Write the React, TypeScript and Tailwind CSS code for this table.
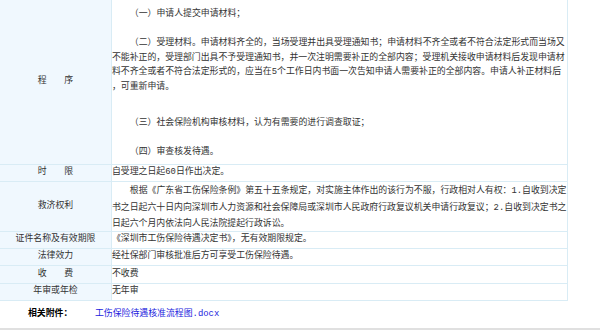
const font = "font-['Liberation_Mono','Noto_Sans_CJK_SC',monospace]";

function Row({
  label,
  h,
  children,
}: {
  label: string;
  h: string;
  children: React.ReactNode;
}) {
  return (
    <div className={`flex border-b border-[#d9ecf5] ${h}`}>
      <div className="w-[112px] shrink-0 flex items-center justify-center bg-[#f0f8fe] border-r border-[#d9ecf5] whitespace-nowrap">
        {label}
      </div>
      <div className="flex-1 flex items-center whitespace-nowrap">{children}</div>
    </div>
  );
}

export default function App() {
  return (
    <div className={`w-[600px] h-[334px] bg-white text-[#333] text-[8.9px] ${font}`}>
      <div className="w-[568px] border-r border-[#d9ecf5]">
        {/* 程序 */}
        <div className="flex border-b border-[#d9ecf5] h-[165px]">
          <div className="w-[112px] shrink-0 flex items-center justify-center bg-[#f0f8fe] border-r border-[#d9ecf5]">
            程　　序
          </div>
          <div className="flex-1 pt-[7px] leading-[14.5px] whitespace-nowrap">
            <p className="indent-[2em]">（一）申请人提交申请材料；</p>
            <p className="mt-[14.5px]">
              <span className="pl-[2em]">
                （二）受理材料。申请材料齐全的，当场受理并出具受理通知书；申请材料不齐全或者不符合法定形式而当场又
              </span>
              <br />
              不能补正的，受理部门出具不予受理通知书，并一次注明需要补正的全部内容；受理机关接收申请材料后发现申请材
              <br />
              料不齐全或者不符合法定形式的，应当在5个工作日内书面一次告知申请人需要补正的全部内容。申请人补正材料后
              <br />
              ，可重新申请。
            </p>
            <p className="indent-[2em] mt-[22px]">（三）社会保险机构审核材料，认为有需要的进行调查取证；</p>
            <p className="indent-[2em] mt-[14.5px]">（四）审查核发待遇。</p>
          </div>
        </div>

        <Row label="时　　限" h="h-[17px]">
          自受理之日起60日作出决定。
        </Row>

        {/* 救济权利 */}
        <div className="flex border-b border-[#d9ecf5] h-[50px]">
          <div className="w-[112px] shrink-0 flex items-center justify-center bg-[#f0f8fe] border-r border-[#d9ecf5]">
            救济权利
          </div>
          <div className="flex-1 pt-[1px] leading-[16.5px] whitespace-nowrap">
            <span className="pl-[2em]">
              根据《广东省工伤保险条例》第五十五条规定，对实施主体作出的该行为不服，行政相对人有权：1.自收到决定
            </span>
            <br />
            书之日起六十日内向深圳市人力资源和社会保障局或深圳市人民政府行政复议机关申请行政复议；2.自收到决定书之
            <br />
            日起六个月内依法向人民法院提起行政诉讼。
          </div>
        </div>

        <Row label="证件名称及有效期限" h="h-[17px]">
          《深圳市工伤保险待遇决定书》，无有效期限规定。
        </Row>
        <Row label="法律效力" h="h-[17px]">
          经社保部门审核批准后方可享受工伤保险待遇。
        </Row>
        <Row label="收　　费" h="h-[18px]">
          不收费
        </Row>
        <Row label="年审或年检" h="h-[17px]">
          无年审
        </Row>
      </div>

      {/* 相关附件 */}
      <div className="flex items-center h-[29px] border-b-2 border-[#e0e0e0]">
        <span className="ml-[28px] w-[67px] font-bold text-black">相关附件：</span>
        <a href="#" className="text-[#2222dd]">
          工伤保险待遇核准流程图.docx
        </a>
      </div>
    </div>
  );
}
